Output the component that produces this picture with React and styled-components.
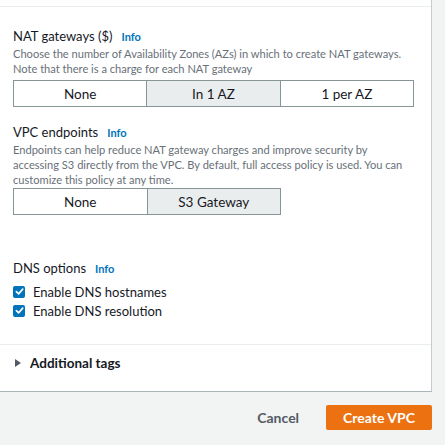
import React, { useState } from "react";
import styled, { createGlobalStyle } from "styled-components";

const GlobalStyle = createGlobalStyle`
  body {
    margin: 0;
    background: #f2f3f3;
    font-family: Lato, "Liberation Sans", Arial, sans-serif;
    color: #16191f;
  }
`;

const Page = styled.div`
  width: 445px;
  height: 445px;
  overflow: hidden;
  background: #f2f3f3;
`;

const Panel = styled.div`
  width: 431px;
  background: #fff;
  border-right: 1px solid #c4cccd;
  border-bottom: 1px solid #aab7b8;
  padding-top: 6px;
`;

const Rule = styled.div`
  height: 1px;
  background: #eaeded;
`;

const Body = styled.div`
  padding: 20px 20px 24px 13px;
`;

const Field = styled.div`
  margin-top: ${(p) => p.$top || 0}px;
`;

const Label = styled.div`
  font-size: 13px;
  line-height: 18px;
  display: flex;
  align-items: baseline;
  gap: 9px;
`;

const Info = styled.a`
  font-size: 11px;
  font-weight: bold;
  color: #0073bb;
  text-decoration: none;
`;

const Desc = styled.div`
  font-size: 11.1px;
  line-height: 15px;
  color: #687078;
  white-space: nowrap;
`;

const Segments = styled.div`
  display: flex;
  width: ${(p) => p.$count * 133}px;
  margin-top: ${(p) => p.$top}px;
  border: 1px solid #879596;
`;

const Segment = styled.button`
  flex: 1;
  height: 25px;
  border: none;
  border-left: 1px solid #879596;
  background: ${(p) => (p.$active ? "#eaeded" : "#fff")};
  color: #16191f;
  font-family: inherit;
  font-size: 13.5px;
  padding: 0;
  &:first-child {
    border-left: none;
  }
`;

const Checks = styled.div`
  margin-top: 4px;
`;

const CheckRow = styled.label`
  display: flex;
  align-items: center;
  gap: 8px;
  height: 19px;
  font-size: 13px;
`;

const Box = styled.span`
  width: 12px;
  height: 12px;
  border-radius: 2px;
  background: #0073bb;
  display: inline-flex;
  align-items: center;
  justify-content: center;
`;

const Expander = styled.div`
  display: flex;
  align-items: center;
  gap: 9px;
  padding: 9px 13px 19px 15px;
  line-height: 18px;
  font-size: 13.5px;
  font-weight: bold;
  color: #16191f;
`;

const Arrow = styled.span`
  width: 0;
  height: 0;
  border-top: 4px solid transparent;
  border-bottom: 4px solid transparent;
  border-left: 6px solid #545b64;
`;

const Footer = styled.div`
  display: flex;
  justify-content: flex-end;
  align-items: center;
  gap: 8px;
  padding: 13px 13px 0 0;
`;

const Button = styled.button`
  height: 25px;
  border: none;
  border-radius: 2px;
  padding: 0 ${(p) => (p.$primary ? 17 : 19)}px;
  background: ${(p) => (p.$primary ? "#ec7211" : "transparent")};
  color: ${(p) => (p.$primary ? "#fff" : "#545b64")};
  font-family: inherit;
  font-size: 14px;
  font-weight: bold;
`;

const Check = () => (
  <Box>
    <svg width="9" height="9" viewBox="0 0 10 10">
      <path d="M1.5 5.2 L4 7.6 L8.6 2.4" fill="none" stroke="#fff" strokeWidth="1.8" strokeLinecap="round" strokeLinejoin="round" />
    </svg>
  </Box>
);

export default function App() {
  const [nat, setNat] = useState("In 1 AZ");
  const [ep, setEp] = useState("S3 Gateway");

  return (
    <Page>
      <GlobalStyle />
      <Panel>
        <Rule />
        <Body>
          <Field>
            <Label>
              NAT gateways ($) <Info>Info</Info>
            </Label>
            <Desc>
              Choose the number of Availability Zones (AZs) in which to create NAT gateways.
              <br />
              Note that there is a charge for each NAT gateway
            </Desc>
            <Segments $count={3} $top={4}>
              {["None", "In 1 AZ", "1 per AZ"].map((o) => (
                <Segment key={o} $active={nat === o} onClick={() => setNat(o)}>
                  {o}
                </Segment>
              ))}
            </Segments>
          </Field>
          <Field $top={16}>
            <Label>
              VPC endpoints <Info>Info</Info>
            </Label>
            <Desc>
              Endpoints can help reduce NAT gateway charges and improve security by
              <br />
              accessing S3 directly from the VPC. By default, full access policy is used. You can
              <br />
              customize this policy at any time.
            </Desc>
            <Segments $count={2} $top={1}>
              {["None", "S3 Gateway"].map((o) => (
                <Segment key={o} $active={ep === o} onClick={() => setEp(o)}>
                  {o}
                </Segment>
              ))}
            </Segments>
          </Field>
          <Field $top={44}>
            <Label>
              DNS options <Info>Info</Info>
            </Label>
            <Checks>
              <CheckRow>
                <Check /> Enable DNS hostnames
              </CheckRow>
              <CheckRow>
                <Check /> Enable DNS resolution
              </CheckRow>
            </Checks>
          </Field>
        </Body>
        <Rule />
        <Expander>
          <Arrow /> Additional tags
        </Expander>
      </Panel>
      <Footer>
        <Button>Cancel</Button>
        <Button $primary>Create VPC</Button>
      </Footer>
    </Page>
  );
}
